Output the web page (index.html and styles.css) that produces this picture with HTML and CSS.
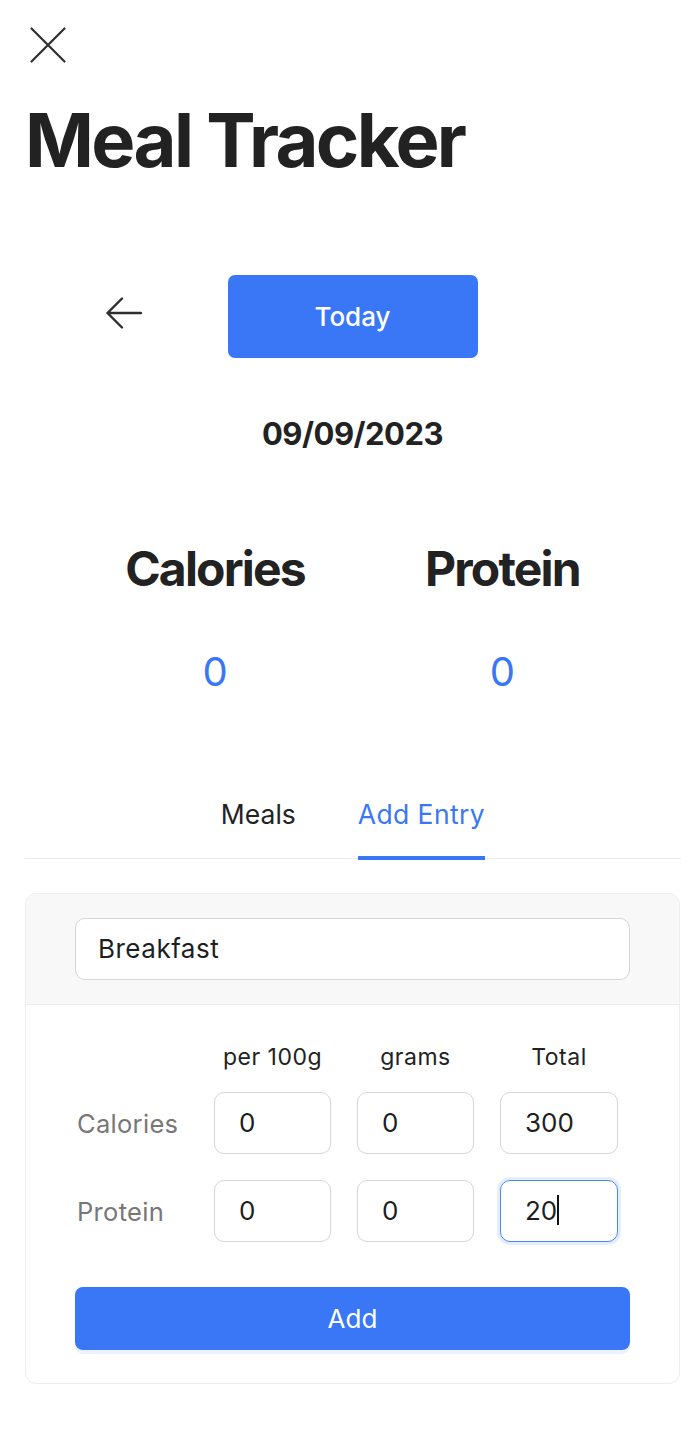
FILE: index.html
```html
<!DOCTYPE html>
<html>
<head>
<meta charset="utf-8">
<link rel="stylesheet" href="styles.css">
</head>
<body>
<div class="page">
  <button class="close" aria-label="Close">
    <svg width="36" height="36" viewBox="0 0 36 36"><path d="M1.5 1.5L34.5 34.5M34.5 1.5L1.5 34.5" stroke="#2e2e2e" stroke-width="2.2" fill="none" stroke-linecap="round"/></svg>
  </button>
  <h1 class="title">Meal Tracker</h1>

  <div class="nav">
    <span class="arrow">
      <svg width="36" height="36" viewBox="0 0 36 36"><path d="M35 18H1.5M16 3.5L1.5 18L16 32.5" stroke="#2e2e2e" stroke-width="2.4" fill="none" stroke-linecap="round" stroke-linejoin="round"/></svg>
    </span>
    <button class="today">Today</button>
    <span class="arrow hidden"></span>
  </div>

  <div class="date">09/09/2023</div>

  <div class="stats">
    <div class="stat">
      <div class="stat-label">Calories</div>
      <div class="stat-value">0</div>
    </div>
    <div class="stat">
      <div class="stat-label">Protein</div>
      <div class="stat-value">0</div>
    </div>
  </div>

  <div class="tabs">
    <div class="tab">Meals</div>
    <div class="tab active">Add Entry</div>
  </div>

  <div class="card">
    <div class="card-head">
      <div class="field name">Breakfast</div>
    </div>
    <div class="card-body">
      <div class="grid">
        <div></div>
        <div class="col-head">per 100g</div>
        <div class="col-head">grams</div>
        <div class="col-head">Total</div>

        <div class="row-label">Calories</div>
        <div class="field">0</div>
        <div class="field">0</div>
        <div class="field">300</div>

        <div class="row-label">Protein</div>
        <div class="field">0</div>
        <div class="field">0</div>
        <div class="field focus">20<span class="caret"></span></div>
      </div>
      <button class="add">Add</button>
    </div>
  </div>
</div>
</body>
</html>
```

FILE: styles.css
```css
* { box-sizing: border-box; }
html, body { margin: 0; background: #fff; }
body {
  font-family: Inter, "Noto Sans", sans-serif;
  color: #222;
}
.page {
  width: 700px;
  padding: 27px 20px 0 25px;
}
.close {
  display: block;
  width: 36px;
  height: 36px;
  margin: 0 0 0 5px;
  padding: 0;
  border: 0;
  background: none;
}
.close svg { display: block; }
.title {
  margin: 32px 0 0 0;
  font-size: 74px;
  line-height: 90px;
  font-weight: 700;
  letter-spacing: -2.6px;
  color: #222;
}
.nav {
  margin-top: 90px;
  display: flex;
  justify-content: center;
  align-items: center;
  gap: 86px;
  width: 655px;
}
.arrow { width: 36px; height: 36px; display: block; margin-top: -7px; }
.arrow svg { display: block; }
.today {
  width: 250px;
  height: 83px;
  border: 0;
  border-radius: 7px;
  background: #3a77f6;
  color: #fff;
  font-family: Inter, "Noto Sans", sans-serif;
  font-size: 26px;
  font-weight: 500;
}
.date {
  width: 655px;
  margin-top: 56px;
  text-align: center;
  font-size: 31px;
  line-height: 40px;
  font-weight: 700;
  letter-spacing: -0.5px;
}
.stats {
  width: 655px;
  margin-top: 86px;
  display: flex;
  justify-content: center;
  gap: 120px;
}
.stat { text-align: center; }
.stat-label {
  font-size: 48px;
  line-height: 58px;
  font-weight: 700;
  letter-spacing: -1.8px;
}
.stat-value {
  margin-top: 50px;
  font-size: 40px;
  line-height: 48px;
  color: #3a77f6;
}
.tabs {
  width: 656px;
  margin-top: 102px;
  display: flex;
  justify-content: center;
  gap: 62px;
  border-bottom: 1px solid #ececec;
  height: 61px;
}
.tab {
  font-size: 26.5px;
  line-height: 32px;
  height: 62px;
  border-bottom: 4px solid transparent;
}
.tab.active {
  color: #3a77f6;
  border-bottom-color: #3a77f6;
  letter-spacing: 0.4px;
}
.card {
  width: 655px;
  margin-top: 34px;
  border: 1.5px solid #eee;
  border-radius: 11px;
  overflow: hidden;
}
.card-head {
  background: #f8f8f8;
  padding: 24px 50px 24px 49px;
  border-bottom: 1.5px solid #ececec;
}
.field {
  height: 62px;
  border: 1.5px solid #d6d6d6;
  border-radius: 10px;
  background: #fff;
  padding: 0 24px;
  font-size: 26px;
  line-height: 59px;
  color: #1e1e1e;
}
.name { width: 555px; padding-left: 22px; letter-spacing: 0.5px; }
.card-body {
  padding: 33px 50px 33px 49px;
}
.grid {
  display: grid;
  grid-template-columns: 113px 117px 117px 118px;
  grid-template-rows: 28px 62px 62px;
  column-gap: 26px;
  row-gap: 26px;
  align-items: center;
}
.grid > :nth-child(-n+4) { margin-bottom: -9px; }
.col-head {
  text-align: center;
  font-size: 23px;
  line-height: 28px;
  letter-spacing: 0.5px;
  white-space: nowrap;
}
.row-label {
  font-size: 25.5px;
  color: #777;
  padding-left: 2px;
  letter-spacing: 0.3px;
}
.field.focus {
  border-color: #4a89f3;
  box-shadow: 0 0 0 3px #e4eefd;
}
.caret {
  display: inline-block;
  width: 1.5px;
  height: 30px;
  background: #111;
  vertical-align: -5px;
}
.add {
  display: block;
  width: 555px;
  height: 63px;
  margin-top: 45px;
  border: 0;
  border-radius: 8px;
  background: #3a77f6;
  color: #fff;
  font-family: Inter, "Noto Sans", sans-serif;
  font-size: 26px;
  box-shadow: 0 4px 0 #ebf2fd;
}
```
